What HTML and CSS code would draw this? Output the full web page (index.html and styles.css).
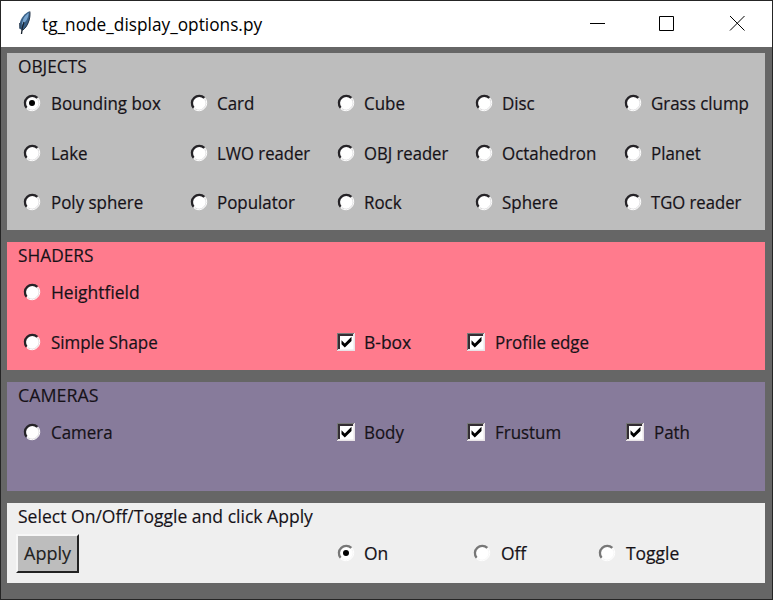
FILE: index.html
```html
<!DOCTYPE html>
<html lang="en">
<head>
<meta charset="utf-8">
<title>tg_node_display_options.py</title>
<link rel="stylesheet" href="styles.css">
</head>
<body>
<svg width="0" height="0" class="defs" aria-hidden="true">
  <symbol id="radio" viewBox="0 0 18 18">
    <circle cx="9" cy="9" r="7.3" fill="#fff"/>
    <path class="ring-dark" d="M3.6 13.8A7.3 7.3 0 0 1 14.3 3.9" fill="none" stroke-width="2.3"/>
    <path class="ring-light" d="M14.7 5.2A6.9 6.9 0 0 1 5 14.7" fill="none" stroke-width=".8"/>
    <path d="M15.4 4.3A8 8 0 0 1 4.3 15.4" fill="none" stroke="#fff" stroke-width="1"/>
  </symbol>
  <symbol id="check" viewBox="0 0 18 18">
    <path d="M0 0H18V18H0Z" fill="#e9e4e8"/>
    <path d="M0 0H17V1H1V17H0Z" fill="#777"/>
    <path d="M1 1H16V16H1Z" fill="#332d33"/>
    <path d="M3 3H16.5V16.5H3Z" fill="#fff"/>
    <path d="M4.5 7.2L7.8 10.5L14.5 3.8V8L7.8 14.5L4.5 11.2Z" fill="#000"/>
  </symbol>
</svg>
<div class="window">
  <header class="titlebar">
    <svg class="feather" viewBox="0 0 16 26">
      <path d="M12.6 1.2C8 3 3.2 8 2.6 14.5L2.4 18.5L5.5 20.5C10.5 17 14.3 9 12.6 1.2Z" fill="#386087"/>
      <path d="M11.8 3C8 5 5.4 9 4.8 15C9 12 11.5 8 11.8 3Z" fill="#79a5cf"/>
      <path d="M12.9 1.5C13.8 9 10.2 17 5.5 20.3M3 18.5L2.7 13" fill="none" stroke="#26364a" stroke-width="1"/>
      <path d="M7 12C5.500 16 4.8 20 4.5 24" fill="none" stroke="#18222d" stroke-width="1.3"/>
    </svg>
    <h1 class="title">tg_node_display_options.py</h1>
    <svg class="controls" viewBox="0 0 160 20" fill="none" stroke="#000" stroke-width="1">
      <path d="M1 10.5H16M70.5 3.5H84.5V17.5H70.5ZM141 3L155.5 17.5M155.5 3L141 17.5"/>
    </svg>
  </header>
  <main class="content">
    <section class="panel objects">
      <h2>OBJECTS</h2>
      <div class="grid">
        <label><svg class="mark"><use href="#radio"/><circle cx="9" cy="9" r="3"/></svg><span>Bounding box</span></label>
        <label><svg class="mark"><use href="#radio"/></svg><span>Card</span></label>
        <label><svg class="mark"><use href="#radio"/></svg><span>Cube</span></label>
        <label><svg class="mark"><use href="#radio"/></svg><span>Disc</span></label>
        <label><svg class="mark"><use href="#radio"/></svg><span>Grass clump</span></label>
        <label><svg class="mark"><use href="#radio"/></svg><span>Lake</span></label>
        <label><svg class="mark"><use href="#radio"/></svg><span class="narrow">LWO reader</span></label>
        <label><svg class="mark"><use href="#radio"/></svg><span class="narrow">OBJ reader</span></label>
        <label><svg class="mark"><use href="#radio"/></svg><span>Octahedron</span></label>
        <label><svg class="mark"><use href="#radio"/></svg><span>Planet</span></label>
        <label><svg class="mark"><use href="#radio"/></svg><span>Poly sphere</span></label>
        <label><svg class="mark"><use href="#radio"/></svg><span>Populator</span></label>
        <label><svg class="mark"><use href="#radio"/></svg><span>Rock</span></label>
        <label><svg class="mark"><use href="#radio"/></svg><span>Sphere</span></label>
        <label><svg class="mark"><use href="#radio"/></svg><span class="narrow">TGO reader</span></label>
      </div>
    </section>
    <section class="panel shaders">
      <h2>SHADERS</h2>
      <div class="grid">
        <label class="first"><svg class="mark"><use href="#radio"/></svg><span class="wide">Heightfield</span></label>
        <label class="first"><svg class="mark"><use href="#radio"/></svg><span>Simple Shape</span></label>
        <label><svg class="mark"><use href="#check"/></svg><span class="wide">B-box</span></label>
        <label><svg class="mark"><use href="#check"/></svg><span>Profile edge</span></label>
      </div>
    </section>
    <section class="panel cameras">
      <h2>CAMERAS</h2>
      <div class="grid">
        <label class="first"><svg class="mark"><use href="#radio"/></svg><span>Camera</span></label>
        <label><svg class="mark"><use href="#check"/></svg><span>Body</span></label>
        <label><svg class="mark"><use href="#check"/></svg><span>Frustum</span></label>
        <label><svg class="mark"><use href="#check"/></svg><span>Path</span></label>
      </div>
    </section>
    <section class="panel actions">
      <h2>Select On/Off/Toggle and click Apply</h2>
      <div class="grid">
        <button class="apply"><span>Apply</span></button>
        <label><svg class="mark"><use href="#radio"/><circle cx="9" cy="9" r="3"/></svg><span class="wide">On</span></label>
        <label><svg class="mark"><use href="#radio"/></svg><span class="wide">Off</span></label>
        <label><svg class="mark"><use href="#radio"/></svg><span class="wide">Toggle</span></label>
      </div>
    </section>
  </main>
</div>
</body>
</html>
```
FILE: styles.css
```css
* { box-sizing: border-box; }
body { margin: 0; font-family: "Open Sans", "Noto Sans", sans-serif; font-size: 18px; color: #161218; --ring-dark: #252327; --ring-light: #d2d0d3; }
.defs { display: block; position: absolute; }
.window { width: 773px; height: 600px; border: 1px solid #252525; background: #666; overflow: hidden; }
.titlebar { height: 46px; background: #fff; display: flex; align-items: center; color: #000; }
.feather { width: 16px; height: 26px; margin: -2px 0 0 16px; }
.title { margin: 0 0 0 9px; font-size: 18.5px; font-weight: 400; line-height: 46px; white-space: nowrap; transform: scaleX(.933); transform-origin: left; }
.controls { width: 160px; height: 20px; margin: -2px 23px 0 auto; }
.content { padding: 6px 7px 0 6px; display: flex; flex-direction: column; gap: 12px; }
.panel { padding-left: 11px; }
.objects { height: 177px; background: #bdbdbd; }
.shaders { height: 128px; background: #ff7b8d; }
.cameras { height: 109px; background: #877b9b; }
.actions { height: 80px; background: #efefef; --ring-dark: #777; --ring-light: #f3f3f3; }
h2 { margin: 0; height: 26px; line-height: 26px; font-size: 18px; font-weight: 400; white-space: nowrap; transform: scaleX(.975); transform-origin: left; -webkit-text-stroke: .15px; }
.objects h2, .shaders h2 { transform: scaleX(.96); }
.cameras h2 { transform: scaleX(.99); }
.grid { display: grid; grid-auto-rows: 49.5px; padding-left: 5px; }
.objects .grid { grid-template-columns: 166.5px 147px 138px 149px 135px; }
.shaders .grid { grid-template-columns: 313.5px 130.5px 1fr; }
.shaders .first:first-child { grid-column: 1 / -1; }
.cameras .grid { grid-template-columns: 313.5px 130.5px 159px 1fr; }
.actions .grid { grid-template-columns: 313.5px 136.5px 125px 1fr; }
label { display: flex; align-items: center; height: 48px; white-space: nowrap; }
label span { margin-left: 9.5px; transform: scaleX(.94); transform-origin: left; -webkit-text-stroke: .2px; }
label .wide { transform: scaleX(.97); }
label .narrow { transform: scaleX(.925); }
.mark { width: 18px; height: 18px; flex: none; }
.ring-dark { stroke: var(--ring-dark); }
.ring-light { stroke: var(--ring-light); }
.apply { width: 63px; height: 39px; margin: 5px 0 0 -7px; padding: 0 0 2px; border: 2px solid; border-color: #f7f7f7 #222 #222 #f7f7f7; background: #bdbdbd; font: inherit; color: #222; -webkit-text-stroke: .15px; }
```
